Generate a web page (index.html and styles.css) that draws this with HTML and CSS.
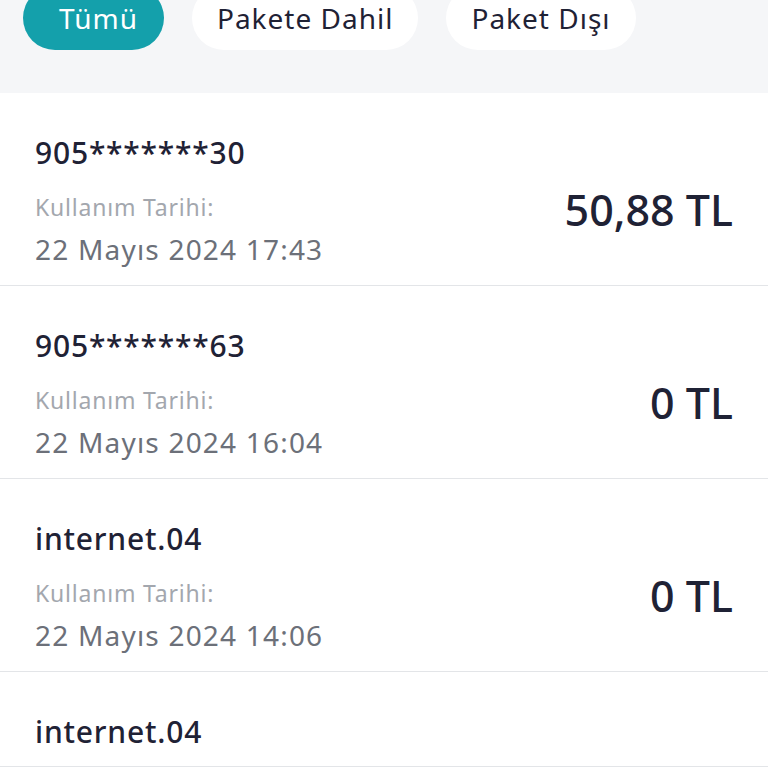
FILE: index.html
```html
<!DOCTYPE html>
<html lang="tr">
<head>
    <meta charset="UTF-8">
    <meta name="viewport" content="width=device-width, initial-scale=1.0">
    <title>Kullanım Detayları</title>
    <link rel="stylesheet" href="styles.css">
</head>
<body>

    <div class="tabs">
        <button class="tab active">Tümü</button>
        <button class="tab">Pakete Dahil</button>
        <button class="tab">Paket Dışı</button>
    </div>

    <ul class="usage-list">
        <li class="usage-item">
            <div class="usage-info">
                <div class="usage-title">905*******30</div>
                <div class="usage-label">Kullanım Tarihi:</div>
                <div class="usage-date">22 Mayıs 2024 17:43</div>
            </div>
            <div class="usage-amount">50,88 TL</div>
        </li>
        <li class="usage-item">
            <div class="usage-info">
                <div class="usage-title">905*******63</div>
                <div class="usage-label">Kullanım Tarihi:</div>
                <div class="usage-date">22 Mayıs 2024 16:04</div>
            </div>
            <div class="usage-amount">0 TL</div>
        </li>
        <li class="usage-item">
            <div class="usage-info">
                <div class="usage-title">internet.04</div>
                <div class="usage-label">Kullanım Tarihi:</div>
                <div class="usage-date">22 Mayıs 2024 14:06</div>
            </div>
            <div class="usage-amount">0 TL</div>
        </li>
        <li class="usage-item">
            <div class="usage-info">
                <div class="usage-title">internet.04</div>
            </div>
        </li>
    </ul>

</body>
</html>
```

FILE: styles.css
```css
html, body {
    height: 768px;
}
body {
    margin: 0;
    font-family: "Noto Sans", "Open Sans", sans-serif;
    background-color: #fff;
    color: #1f2235;
    overflow: hidden;
}
.tabs {
    display: flex;
    gap: 28px;
    padding: 0 23px;
    height: 93px;
    background-color: #f5f6f8;
}
.tab {
    height: 64px;
    margin-top: -14px;
    padding: 0 25px;
    border: none;
    border-radius: 32px;
    background-color: #fff;
    color: #1f2235;
    font-family: inherit;
    font-size: 28px;
    letter-spacing: 1px;
    cursor: pointer;
}
.tab.active {
    padding: 0 26px 0 36px;
    background-color: #14a0ab;
    color: #fff;
}
.usage-list {
    list-style: none;
    margin: 0;
    padding: 0;
}
.usage-item {
    display: flex;
    justify-content: space-between;
    align-items: flex-start;
    padding: 42px 35px 16px;
    border-bottom: 1px solid #e3e5e8;
}
.usage-title {
    font-size: 30px;
    line-height: 36px;
    letter-spacing: 0.8px;
    font-weight: 500;
}
.usage-label {
    margin-top: 20px;
    font-size: 23px;
    line-height: 32px;
    letter-spacing: 0.8px;
    color: #a3a7ae;
}
.usage-date {
    margin-top: 6px;
    font-size: 28px;
    line-height: 40px;
    letter-spacing: 1.2px;
    color: #6c7079;
}
.usage-amount {
    margin-top: 50px;
    font-size: 43px;
    line-height: 50px;
    font-weight: 500;
}
```
